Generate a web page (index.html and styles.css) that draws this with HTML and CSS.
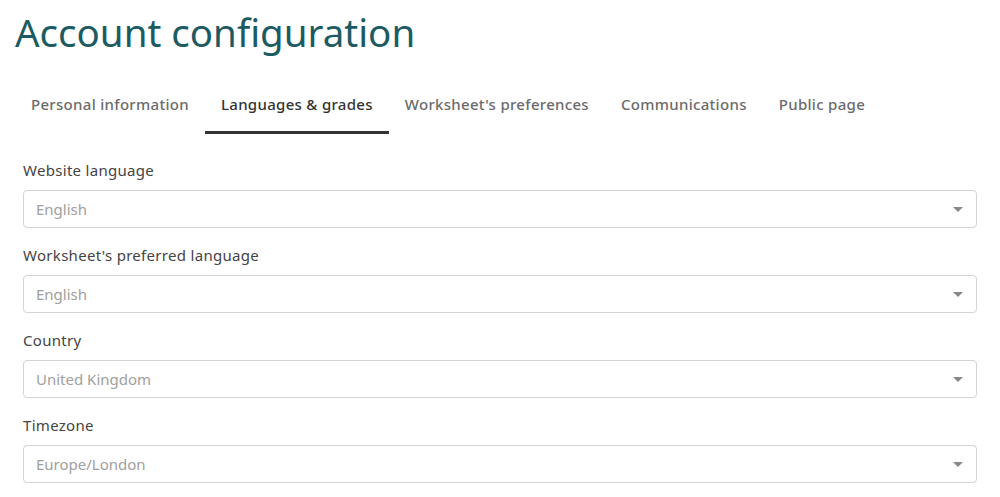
FILE: index.html
```html
<!DOCTYPE html>
<html lang="en">
<head>
  <meta charset="UTF-8" />
  <meta name="viewport" content="width=device-width, initial-scale=1.0"/>
  <title>Account configuration</title>
  <link rel="stylesheet" href="styles.css">
</head>
<body>
  <div class="container">
    <h1>Account configuration</h1>

    <nav class="tabs">
      <a class="tab">Personal information</a>
      <a class="tab active">Languages &amp; grades</a>
      <a class="tab">Worksheet's preferences</a>
      <a class="tab">Communications</a>
      <a class="tab">Public page</a>
    </nav>

    <form class="settings">
      <div class="form-group">
        <label>Website language</label>
        <div class="select">
          <span>English</span>
          <svg class="caret" width="10" height="5" viewBox="0 0 10 5"><path d="M0 0h10L5 5z"/></svg>
        </div>
      </div>

      <div class="form-group">
        <label>Worksheet's preferred language</label>
        <div class="select">
          <span>English</span>
          <svg class="caret" width="10" height="5" viewBox="0 0 10 5"><path d="M0 0h10L5 5z"/></svg>
        </div>
      </div>

      <div class="form-group">
        <label>Country</label>
        <div class="select">
          <span>United Kingdom</span>
          <svg class="caret" width="10" height="5" viewBox="0 0 10 5"><path d="M0 0h10L5 5z"/></svg>
        </div>
      </div>

      <div class="form-group">
        <label>Timezone</label>
        <div class="select">
          <span>Europe/London</span>
          <svg class="caret" width="10" height="5" viewBox="0 0 10 5"><path d="M0 0h10L5 5z"/></svg>
        </div>
      </div>
    </form>
  </div>
</body>
</html>
```

FILE: styles.css
```css
:root {
  --title-color: #1d5b63;
  --tab-color: #6b6b6b;
  --tab-active: #333;
  --label-color: #444;
  --value-color: #a0a0a0;
  --border: #d3d3d3;
}

* {
  box-sizing: border-box;
  margin: 0;
  padding: 0;
}

body {
  font-family: 'Noto Sans', 'Open Sans', sans-serif;
  background: #fff;
  color: var(--label-color);
}

.container {
  padding: 8px 23px 0 15px;
}

h1 {
  color: var(--title-color);
  font-weight: 400;
  font-size: 38.5px;
  line-height: 48px;
}

.tabs {
  display: flex;
  margin-top: 26px;
}

.tab {
  padding: 12px 16px 17px;
  font-size: 15px;
  line-height: 20px;
  font-weight: 500;
  letter-spacing: 0.3px;
  color: var(--tab-color);
  border-bottom: 3px solid transparent;
}

.tab.active {
  color: var(--tab-active);
  border-bottom-color: #333;
}

.settings {
  padding: 26px 0 0 8px;
  display: flex;
  flex-direction: column;
  gap: 17px;
}

.form-group label {
  display: block;
  font-size: 15px;
  line-height: 20px;
  letter-spacing: 0.3px;
  margin-bottom: 10px;
}

.select {
  height: 38px;
  border: 1px solid var(--border);
  border-radius: 4px;
  display: flex;
  align-items: center;
  justify-content: space-between;
  padding: 0 13px 0 12px;
  font-size: 15px;
  color: var(--value-color);
}

.caret {
  fill: #888;
}
```
